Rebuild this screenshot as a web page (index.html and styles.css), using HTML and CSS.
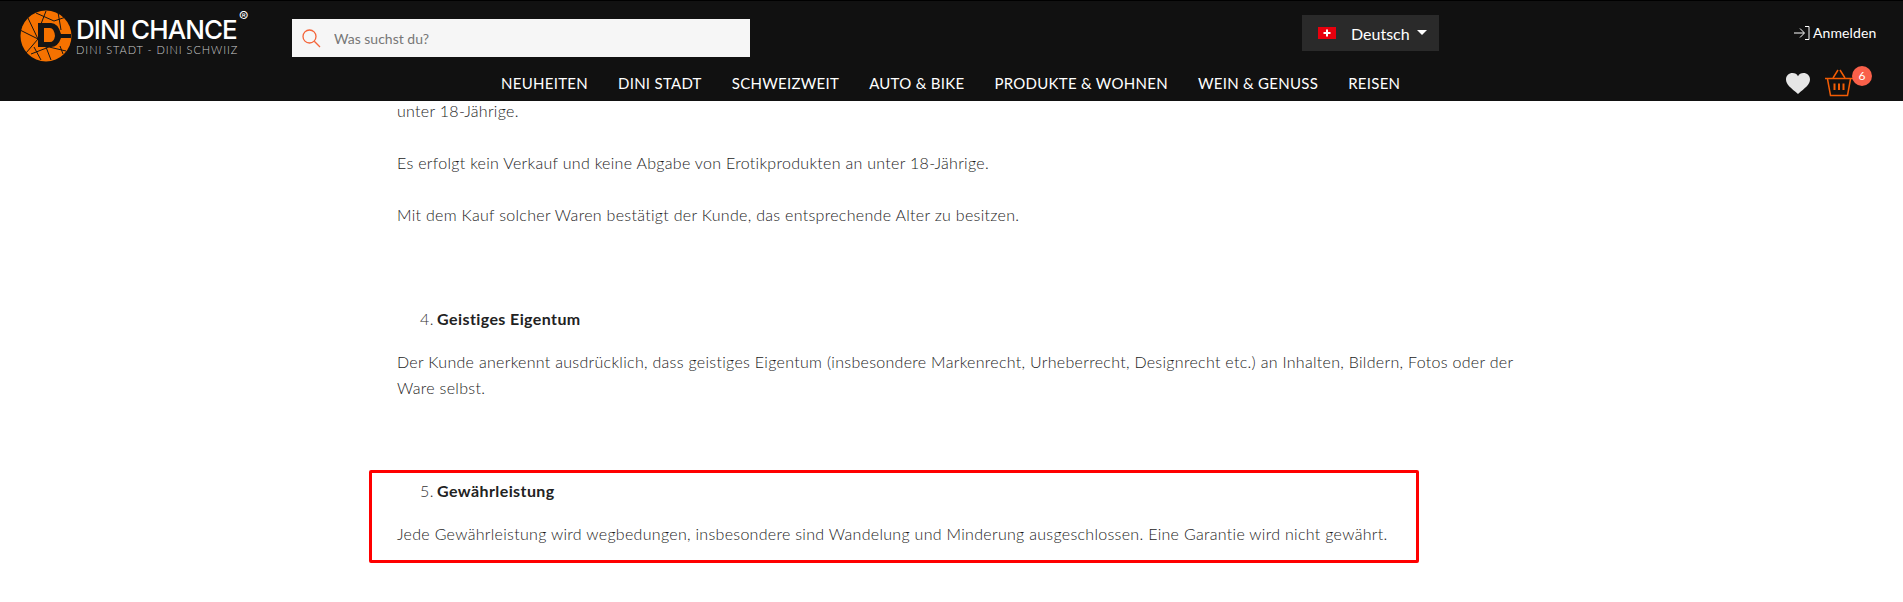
FILE: index.html
```html
<!DOCTYPE html>
<html lang="de">
<head>
    <meta charset="UTF-8">
    <meta name="viewport" content="width=device-width, initial-scale=1.0">
    <title>Dini Chance - AGB</title>
    <link rel="stylesheet" href="styles.css">
</head>
<body>
    <header class="site-header">
        <div class="header-top">
            <a class="logo" href="#">
                <svg class="logo-mark" width="52" height="52" viewBox="0 0 52 52">
                    <circle cx="26" cy="26" r="25.5" fill="#f57200"/>
                    <g fill="none" stroke="#151515" stroke-width="1">
                        <path d="M7 6 L18 29 L6 43"/>
                        <path d="M0 20 L18 29"/>
                        <path d="M16 3 L34 11 L46 7"/>
                        <path d="M26 1 L21 14"/>
                        <path d="M38 2 L41 20"/>
                        <path d="M11 44 L29 37 L46 41"/>
                        <path d="M26 37 L31 50"/>
                        <path d="M40 36 L43 44"/>
                        <path d="M14 37 L21 50"/>
                    </g>
                    <path d="M18 13 H31 Q38 13 41 24 H51 V28 H41 Q38 37 31 37 H18 Z M24 18 V32 H30 Q34 32 35 26 Q34 18 30 18 Z" fill="#151515" fill-rule="evenodd"/>
                </svg>
                <span class="logo-text">
                    <span class="logo-name">DINI CHANCE<sup class="logo-reg">®</sup></span>
                    <span class="logo-claim">DINI STADT - DINI SCHWIIZ</span>
                </span>
            </a>
            <form class="search">
                <svg class="search-icon" width="19" height="19" viewBox="0 0 19 19" fill="none" stroke="#f4653a" stroke-width="1.3">
                    <circle cx="7.5" cy="7.5" r="6.5"/>
                    <path d="M12.3 12.3 L18 18"/>
                </svg>
                <input class="search-input" type="text" placeholder="Was suchst du?">
            </form>
            <button class="lang" type="button">
                <svg class="flag" width="18" height="12" viewBox="0 0 18 12">
                    <rect width="18" height="12" fill="#e8000d"/>
                    <path d="M8 2.5 H10 V5 H12.5 V7 H10 V9.5 H8 V7 H5.500 V5 H8 Z" fill="#fff"/>
                </svg>
                <span>Deutsch</span>
                <span class="caret"></span>
            </button>
            <a class="login" href="#">
                <svg width="16" height="14" viewBox="0 0 16 14" fill="none" stroke="#fff" stroke-width="1">
                    <path d="M0 7 H10 M6 2.500 L10.500 7 L6 11.500"/>
                    <path d="M11 .5 H15 V13.500 H11"/>
                </svg>
                Anmelden
            </a>
        </div>
        <div class="header-bottom">
            <nav class="main-nav">
                <a href="#">NEUHEITEN</a>
                <a href="#">DINI STADT</a>
                <a href="#">SCHWEIZWEIT</a>
                <a href="#">AUTO &amp; BIKE</a>
                <a href="#">PRODUKTE &amp; WOHNEN</a>
                <a href="#">WEIN &amp; GENUSS</a>
                <a href="#">REISEN</a>
            </nav>
            <div class="header-icons">
                <svg width="24" height="21" viewBox="0 0 24 21">
                    <path d="M12 21 C5 15 0 11.500 0 6.500 C0 2.500 3 0 6.500 0 C9 0 11 1.200 12 3.200 C13 1.200 15 0 17.500 0 C21 0 24 2.500 24 6.500 C24 11.500 19 15 12 21 Z" fill="#e6e6e6"/>
                </svg>
                <a class="cart" href="#">
                    <svg width="30" height="28" viewBox="0 0 30 28" fill="none" stroke="#f25c05" stroke-width="1.500">
                        <path d="M1 9.500 H29"/>
                        <path d="M3.500 10 L6.500 26.500 H23.500 L26.500 10"/>
                        <path d="M9 9 L14 1 M21 9 L16 1"/>
                        <path d="M10.500 14.500 V21 M15 14.500 V21 M19.500 14.500 V21" stroke-width="2"/>
                    </svg>
                    <span class="cart-badge">6</span>
                </a>
            </div>
        </div>
    </header>

    <main class="content">
        <p>unter 18-Jährige.</p>
        <p>Es erfolgt kein Verkauf und keine Abgabe von Erotikprodukten an unter 18-Jährige.</p>
        <p>Mit dem Kauf solcher Waren bestätigt der Kunde, das entsprechende Alter zu besitzen.</p>

        <h2 class="term term-4"><span class="term-no">4.</span> Geistiges Eigentum</h2>
        <p>Der Kunde anerkennt ausdrücklich, dass geistiges Eigentum (insbesondere Markenrecht, Urheberrecht, Designrecht etc.) an Inhalten, Bildern, Fotos oder der Ware selbst.</p>

        <section class="highlight">
            <h2 class="term"><span class="term-no">5.</span> Gewährleistung</h2>
            <p>Jede Gewährleistung wird wegbedungen, insbesondere sind Wandelung und Minderung ausgeschlossen. Eine Garantie wird nicht gewährt.</p>
        </section>
    </main>
</body>
</html>
```

FILE: styles.css
```css
* {
    box-sizing: border-box;
}
html, body {
    height: 100%;
}
body {
    margin: 0;
    padding-top: 98px;
    overflow: hidden;
    background: #fff;
    color: #1c1c1c;
    font-family: Lato, Arial, sans-serif;
    font-size: 16px;
    font-weight: 300;
    line-height: 26px;
    letter-spacing: .3px;
}
a {
    color: inherit;
    text-decoration: none;
}

/* header */
.site-header {
    position: fixed;
    top: 0;
    left: 0;
    right: 0;
    z-index: 10;
    height: 101px;
    background: #111;
    border-top: 1px solid #000;
    color: #fff;
    letter-spacing: 0;
}
.header-top {
    display: flex;
    align-items: flex-start;
    height: 64px;
    padding-left: 20px;
}
.logo {
    display: flex;
    align-items: center;
    gap: 4px;
    width: 272px;
    margin-top: 9px;
}
.logo-mark {
    flex: none;
}
.logo-text {
    display: flex;
    flex-direction: column;
    padding-top: 1px;
}
.logo-name {
    position: relative;
    font-family: Inter, Arial, sans-serif;
    font-size: 26px;
    font-weight: 500;
    line-height: 27px;
    letter-spacing: -.9px;
    white-space: nowrap;
}
.logo-reg {
    position: absolute;
    top: -6px;
    left: 163px;
    font-size: 14px;
    font-weight: 400;
    line-height: 14px;
    letter-spacing: 0;
}
.logo-claim {
    color: #ccc;
    font-size: 11px;
    font-weight: 300;
    line-height: 14px;
    letter-spacing: .95px;
    white-space: nowrap;
}
.search {
    display: flex;
    align-items: center;
    gap: 11px;
    width: 458px;
    height: 38px;
    margin-top: 18px;
    padding-left: 10px;
    background: #f6f6f6;
}
.search-input {
    flex: 1;
    border: none;
    outline: none;
    background: none;
    color: #555;
    font-family: Lato, Arial, sans-serif;
    font-size: 14px;
}
.search-input::placeholder {
    color: #777;
}
.lang {
    display: flex;
    align-items: center;
    width: 137px;
    height: 36px;
    margin: 14px 0 0 552px;
    padding: 0 0 0 16px;
    border: none;
    background: #2a2a2a;
    color: #fff;
    font-family: Lato, Arial, sans-serif;
    font-size: 16px;
}
.flag {
    margin-right: 15px;
}
.caret {
    margin: -2px 0 0 7px;
    border-top: 5px solid #fff;
    border-left: 5px solid transparent;
    border-right: 5px solid transparent;
}
.login {
    display: flex;
    align-items: center;
    gap: 3px;
    margin: 18px 0 0 355px;
    font-size: 14px;
    font-weight: 400;
    line-height: 28px;
    letter-spacing: .1px;
    white-space: nowrap;
}
.header-bottom {
    display: flex;
    align-items: center;
    height: 36px;
}
.main-nav {
    display: flex;
    gap: 30px;
    margin-left: 501px;
    font-size: 15px;
    font-weight: 400;
    letter-spacing: .28px;
    white-space: nowrap;
}
.header-icons {
    display: flex;
    align-items: center;
    gap: 14px;
    margin-left: auto;
    margin-right: 49px;
}
.cart {
    position: relative;
    display: block;
    height: 28px;
}
.cart-badge {
    position: absolute;
    top: -3px;
    left: 28px;
    width: 20px;
    height: 20px;
    border-radius: 50%;
    background: #f9604a;
    color: #fff;
    font-size: 12px;
    font-weight: 400;
    line-height: 20px;
    text-align: center;
}

/* content */
.content {
    width: 1125px;
    margin-left: 397px;
}
.content p {
    margin: 0 0 26px;
}
.term {
    margin: 0 0 17px;
    padding-left: 23px;
    color: #222;
    font-size: 16px;
    font-weight: 700;
    line-height: 26px;
    letter-spacing: .4px;
}
.term-4 {
    margin-top: 78px;
}
.term-no {
    margin-right: -1px;
    color: #333;
    font-weight: 300;
}
.highlight {
    width: 1050px;
    height: 93px;
    margin: 69px 0 0 -28px;
    padding: 5px 25px;
    border: 3px solid #f00;
    border-radius: 2px;
}
.highlight p {
    margin: 0;
}
```
